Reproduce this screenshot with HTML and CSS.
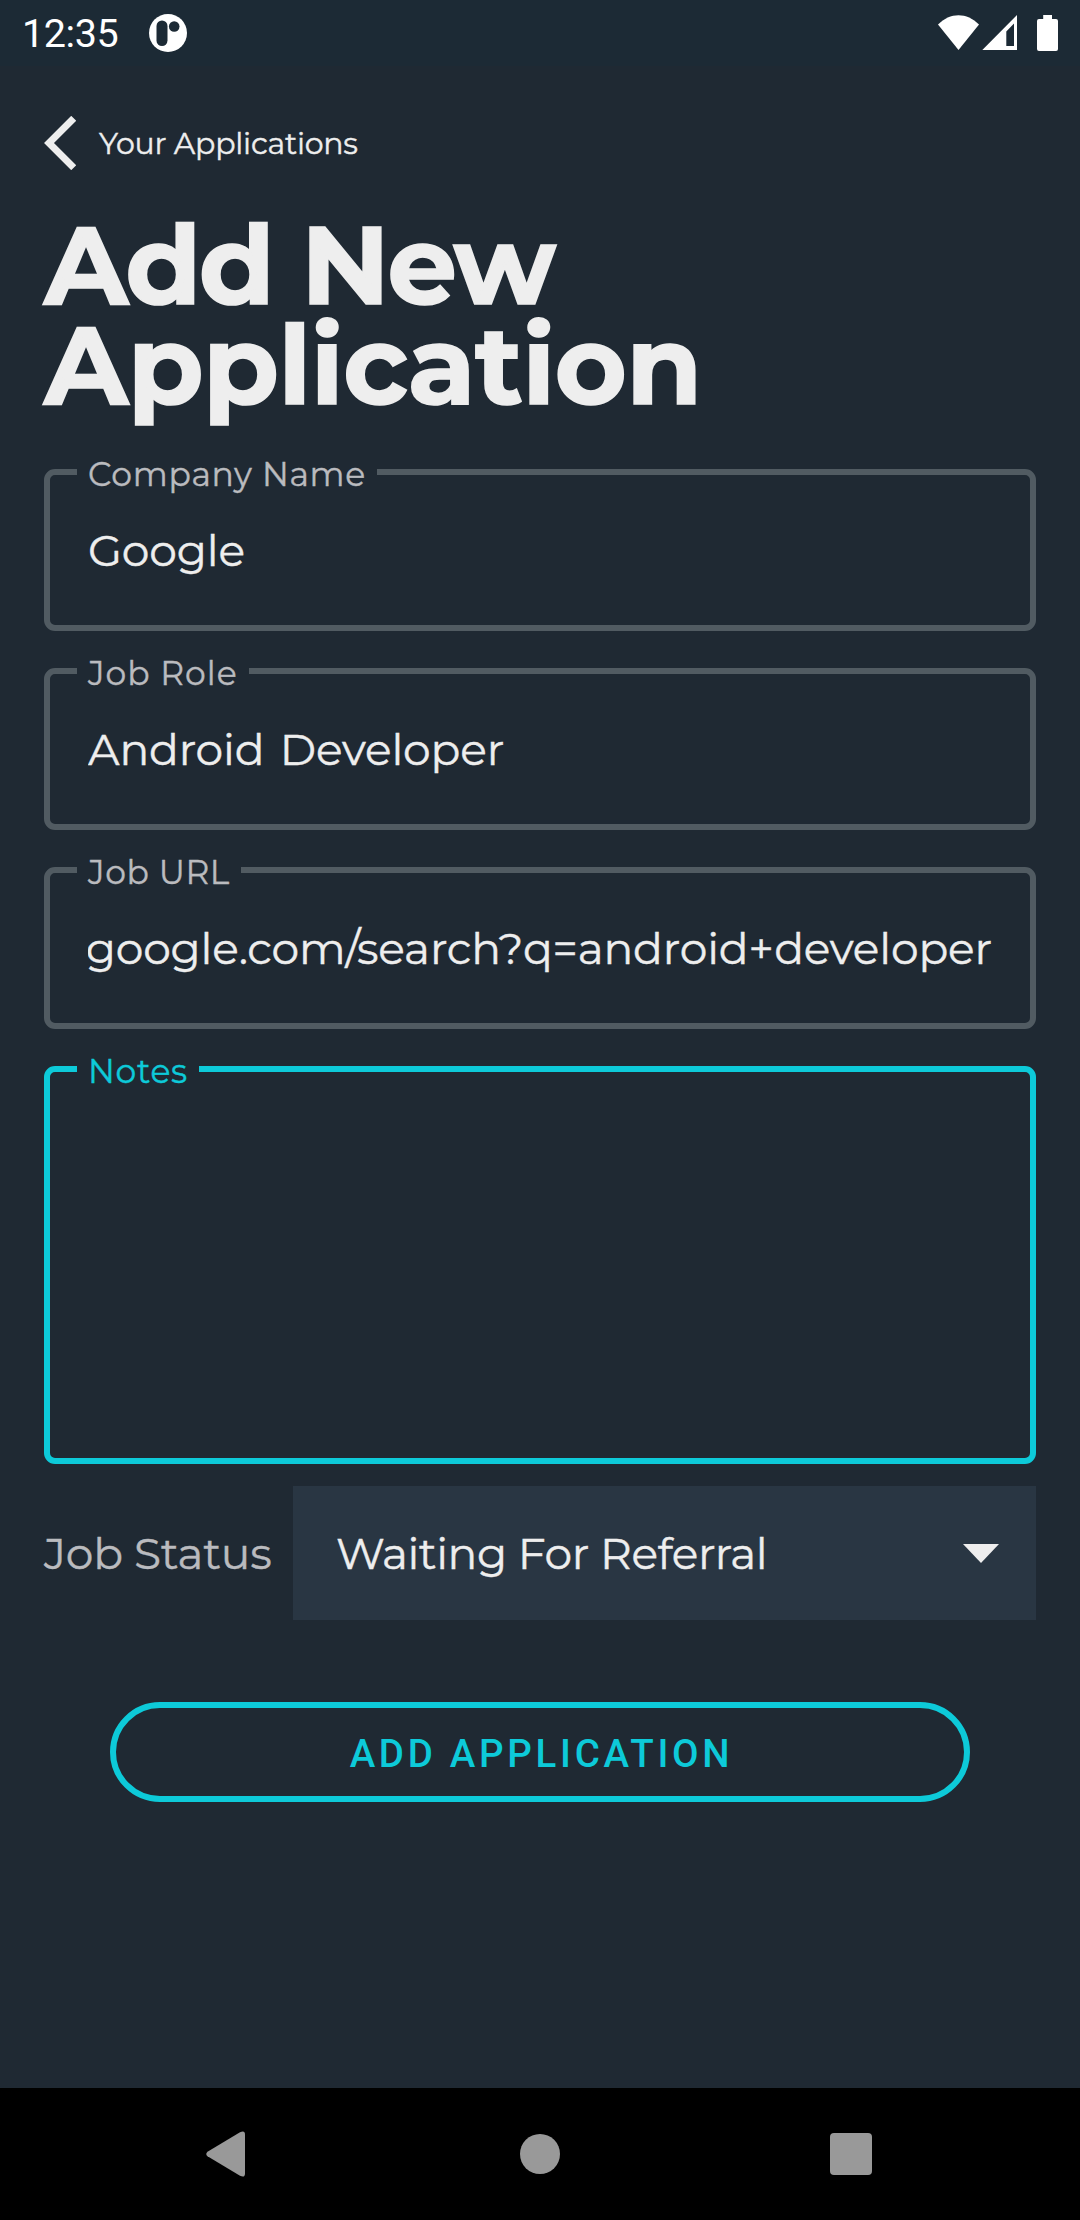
FILE: index.html
```html
<!DOCTYPE html>
<html lang="en">
<head>
<meta charset="utf-8">
<title>Add New Application</title>
<link rel="stylesheet" href="styles.css">
</head>
<body>
<div class="screen">
  <header class="status-bar">
    <span class="clock">12:35</span>
    <svg class="notification" width="38" height="38" viewBox="0 0 38 38" fill="#1c2a35">
      <circle cx="19" cy="19" r="19" fill="#fff"/>
      <rect x="7.5" y="6.5" width="11" height="25.5" rx="5.5"/>
      <circle cx="25.2" cy="12.5" r="5.3"/>
    </svg>
    <svg class="system-icons" width="121" height="37" viewBox="0 0 121 37" fill="#fff">
      <path d="M0 9.5C12-3 29-3 41 9.5L20.500 35Z"/>
      <path fill-rule="evenodd" d="M79 0V35H44.300ZM76 8.500L68.300 16.500V31H76Z"/>
      <path d="M105.200 0h8.800v4h4q2 0 2 2v28q0 2-2 2h-17q-2 0-2-2V6q0-2 2-2h4.200z"/>
    </svg>
  </header>

  <main class="content">
    <nav class="back">
      <svg width="32" height="54" viewBox="0 0 32 54" fill="none" stroke="#eee" stroke-width="7"><path d="M29.700 2.300 5 27 29.700 51.700"/></svg>
      <span class="back-text">Your Applications</span>
    </nav>
    <h1 class="title"><span class="title-top">Add New</span><br>Application</h1>

    <form class="form">
      <fieldset class="field">
        <legend class="label label-company">Company Name</legend>
        <div class="value">Google</div>
      </fieldset>
      <fieldset class="field">
        <legend class="label label-role">Job Role</legend>
        <div class="value">Android Developer</div>
      </fieldset>
      <fieldset class="field">
        <legend class="label label-url">Job URL</legend>
        <div class="value value-end">google.com/search?q=android+developer</div>
      </fieldset>
      <fieldset class="field field-notes">
        <legend class="label label-notes">Notes</legend>
      </fieldset>
      <div class="status-row">
        <span class="status-label">Job Status</span>
        <div class="select">
          <span class="select-text">Waiting For Referral</span>
          <svg width="36" height="19" viewBox="0 0 36 19" fill="#eee"><path d="M0 0H36L18 19Z"/></svg>
        </div>
      </div>
      <button class="submit" type="button">ADD APPLICATION</button>
    </form>
  </main>

  <footer class="nav-bar">
    <svg class="nav-back" width="39" height="46" viewBox="0 0 39 46" fill="#999"><path d="M1.500 20.700 34 1.200Q39-1.200 39 3.500V42.500Q39 47.200 34 44.800L1.500 25.300Q-1 23 1.500 20.700Z"/></svg>
    <span class="nav-home"></span>
    <span class="nav-recent"></span>
  </footer>
</div>
</body>
</html>
```
FILE: styles.css
```css
* { box-sizing: border-box; }

body {
  margin: 0;
  background: #1f2933;
  font-family: Montserrat, Inter, sans-serif;
  font-weight: 400;
  -webkit-text-stroke: 0.4px currentColor;
  color: #eee;
}

svg { display: block; flex: none; }

.screen {
  width: 1080px;
  height: 2220px;
  display: flex;
  flex-direction: column;
  overflow: hidden;
}

.status-bar {
  height: 66px;
  flex: none;
  display: flex;
  align-items: flex-start;
  padding: 15px 21px 0 22px;
  background: #1c2a35;
}
.clock {
  width: 127px;
  font: 39.5px/38px Roboto, sans-serif;
  letter-spacing: -0.4px;
  -webkit-text-stroke: 0;
  color: #fff;
}
.notification { margin-top: -1px; }
.system-icons { margin-left: auto; }

.content {
  flex: 1;
  padding: 50px 44px 0;
}
.back {
  height: 54px;
  display: flex;
  align-items: center;
  gap: 23px;
}
.back-text {
  padding-top: 1px;
  font-size: 30px;
  line-height: 40px;
  letter-spacing: -0.25px;
}
.title {
  margin: 45px 0 0;
  font-size: 110px;
  line-height: 100px;
  font-weight: 700;
  letter-spacing: -0.6px;
  -webkit-text-stroke-width: 1.6px;
  white-space: nowrap;
}
.title-top { letter-spacing: -2.5px; }

.form {
  margin-top: 54px;
  display: flex;
  flex-direction: column;
}
.field {
  min-width: 0;
  height: 162px;
  margin: 0 0 37px;
  padding: 0 38px 0 27px;
  border: 6px solid #515b62;
  border-radius: 11px;
}
.label {
  height: 6px;
  padding: 0 0 0 11px;
  font-size: 33px;
  line-height: 10px;
  letter-spacing: 0.7px;
  white-space: nowrap;
  color: #babbbf;
}
.label-company { width: 300px; }
.label-role { width: 172px; letter-spacing: 1px; }
.label-url { width: 164px; letter-spacing: 0.6px; }
.label-notes { width: 122px; color: #0dcad9; }

.value {
  margin: 47px 0 0 11px;
  font-size: 44px;
  line-height: 56px;
  letter-spacing: -0.15px;
  word-spacing: 4px;
  white-space: nowrap;
  overflow: hidden;
}
.value-end { display: flex; justify-content: flex-end; letter-spacing: -0.15px; }

.field-notes {
  height: 398px;
  margin-bottom: 22px;
  border-color: #0dcad9;
}

.status-row {
  height: 134px;
  display: flex;
  align-items: center;
  font-size: 44px;
  letter-spacing: -0.4px;
}
.status-label { width: 249px; color: #babbbf; letter-spacing: -0.25px; }
.select {
  flex: 1;
  height: 134px;
  padding: 0 37px 0 43px;
  display: flex;
  align-items: center;
  justify-content: space-between;
  background: #293643;
}

.submit {
  height: 100px;
  margin: 82px 66px 0;
  padding: 3px 0 0 3px;
  border: 6px solid #0dcad9;
  border-radius: 50px;
  background: none;
  color: #0dcad9;
  font: 500 38.5px/85px Roboto, sans-serif;
  letter-spacing: 3.7px;
  -webkit-text-stroke: 0;
}

.nav-bar {
  height: 132px;
  flex: none;
  display: flex;
  align-items: center;
  padding: 0 208px 0 206px;
  background: #000;
}
.nav-home { width: 40px; height: 40px; margin: 0 auto 0 275px; border-radius: 50%; background: #999; }
.nav-recent { width: 42px; height: 42px; border-radius: 4px; background: #999; }
```
